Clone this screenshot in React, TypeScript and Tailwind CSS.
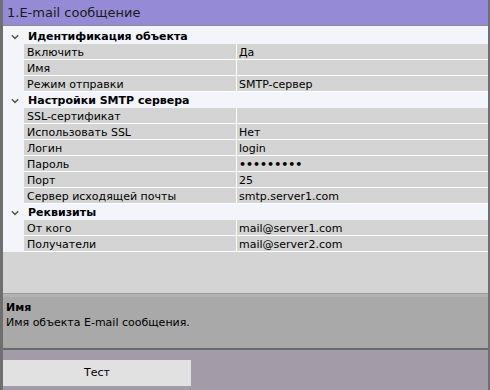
import React from "react";

type Row = { name: string; value?: string; dots?: boolean };
type Section = { title: string; rows: Row[] };

const sections: Section[] = [
  {
    title: "Идентификация объекта",
    rows: [
      { name: "Включить", value: "Да" },
      { name: "Имя", value: "" },
      { name: "Режим отправки", value: "SMTP-сервер" },
    ],
  },
  {
    title: "Настройки SMTP сервера",
    rows: [
      { name: "SSL-сертификат", value: "" },
      { name: "Использовать SSL", value: "Нет" },
      { name: "Логин", value: "login" },
      { name: "Пароль", dots: true },
      { name: "Порт", value: "25" },
      { name: "Сервер исходящей почты", value: "smtp.server1.com" },
    ],
  },
  {
    title: "Реквизиты",
    rows: [
      { name: "От кого", value: "mail@server1.com" },
      { name: "Получатели", value: "mail@server2.com" },
    ],
  },
];

function Chevron() {
  return (
    <svg width="8" height="6" viewBox="0 0 8 6" className="block">
      <path d="M0.8 1.2 L4 4.4 L7.2 1.2" fill="none" stroke="#5a5a5a" strokeWidth="1.5" />
    </svg>
  );
}

export default function App() {
  return (
    <div
      className="w-[490px] h-[390px] flex flex-col border-l-[3px] border-r-[2px] border-[#6f6f6f] bg-[#a39ca8] text-black"
      style={{ fontFamily: '"DejaVu Sans", Verdana, sans-serif' }}
    >
      <div className="h-[26px] shrink-0 bg-[#958ad6] border-b border-[#8e8e8e] flex items-center pl-[4px] pt-[1px] text-[13px] text-[#1a1a1a]">
        1.E-mail сообщение
      </div>
      <div className="bg-[#f3f5fb] pt-[2px] shrink-0 text-[11px] leading-[15px]">
        {sections.map((s) => (
          <div key={s.title}>
            <div className="h-4 flex items-center pt-[1px]">
              <div className="w-[21px] flex justify-center pl-[2px]">
                <Chevron />
              </div>
              <div className="pl-[4px] font-bold">{s.title}</div>
            </div>
            {s.rows.map((r) => (
              <div key={r.name} className="h-4 flex">
                <div className="w-[21px] shrink-0" />
                <div className="flex-1 flex bg-[#d4d4d4] border-b border-white">
                  <div className="w-[213px] shrink-0 pl-[3px] pt-[1px] border-r border-white">
                    {r.name}
                  </div>
                  <div className="flex-1 pl-[2px] pt-[1px]">
                    {r.dots ? <span className="font-bold">•••••••••</span> : r.value}
                  </div>
                </div>
              </div>
            ))}
          </div>
        ))}
      </div>
      <div className="flex-1 bg-[#d4d4d4] border-b border-[#9a9a9a]" />
      <div className="h-[56px] shrink-0 bg-[#a9a9a9] border-t-[3px] border-[#b3b3b3] border-b-2 border-b-[#6c6c6c] px-[3px] pt-[3px] text-[11px] leading-[15px]">
        <div className="font-bold">Имя</div>
        <div>Имя объекта E-mail сообщения.</div>
      </div>
      <div className="h-[40px] shrink-0 bg-[#a39ca8] pt-[10px]">
        <div className="w-[188px] h-[26px] bg-[#e1e1e1] flex items-center justify-center text-[11px]">
          Тест
        </div>
      </div>
    </div>
  );
}
